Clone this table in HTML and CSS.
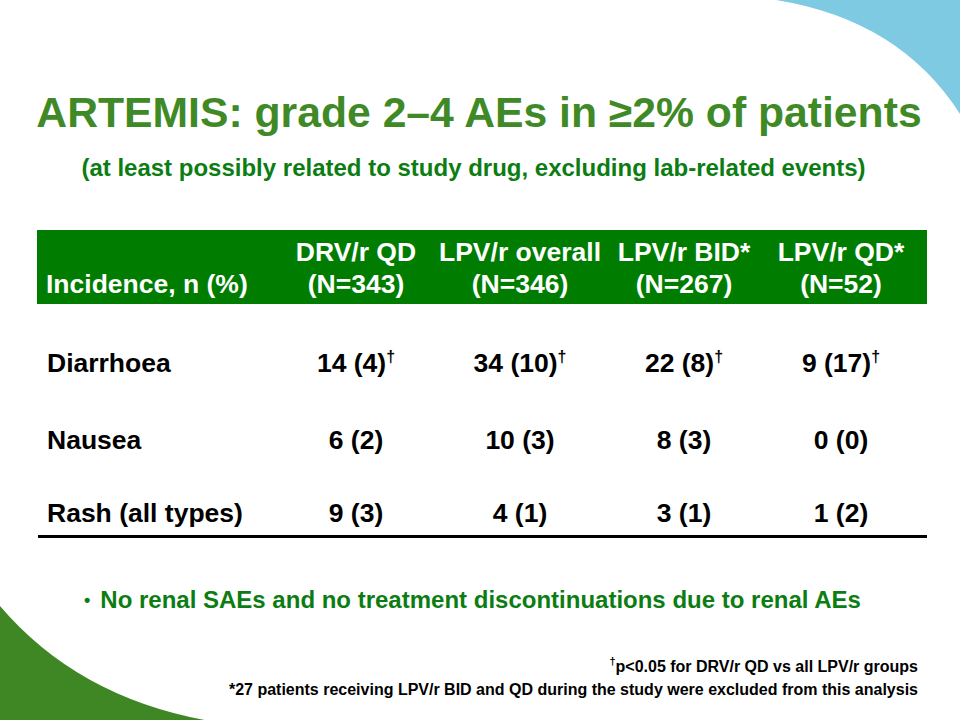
FILE: index.html
```html
<!DOCTYPE html>
<html lang="en">
<head>
<meta charset="utf-8">
<title>ARTEMIS: grade 2–4 AEs</title>
<link rel="stylesheet" href="styles.css">
</head>
<body>
<div class="slide">
  <svg class="decor" width="960" height="720" viewBox="0 0 960 720" aria-hidden="true">
    <path class="decor-blue" d="M 776 0 Q 900 20 960 114 L 960 0 Z"/>
    <path class="decor-green" d="M 0 606 Q 80 700 216 722 L 0 722 Z"/>
  </svg>
  <div class="content">
    <h1 class="title">ARTEMIS: grade 2–4 AEs in ≥2% of patients</h1>
    <p class="subtitle">(at least possibly related to study drug, excluding lab-related events)</p>

    <div class="table">
      <div class="thead">
        <div class="th th-label">Incidence, n (%)</div>
        <div class="th">DRV/r QD<br>(N=343)</div>
        <div class="th">LPV/r overall<br>(N=346)</div>
        <div class="th">LPV/r BID*<br>(N=267)</div>
        <div class="th">LPV/r QD*<br>(N=52)</div>
      </div>
      <div class="tr tr-first">
        <div class="td td-label">Diarrhoea</div>
        <div class="td">14 (4)<sup class="dag">†</sup></div>
        <div class="td">34 (10)<sup class="dag">†</sup></div>
        <div class="td">22 (8)<sup class="dag">†</sup></div>
        <div class="td">9 (17)<sup class="dag">†</sup></div>
      </div>
      <div class="tr tr-second">
        <div class="td td-label">Nausea</div>
        <div class="td">6 (2)</div>
        <div class="td">10 (3)</div>
        <div class="td">8 (3)</div>
        <div class="td">0 (0)</div>
      </div>
      <div class="tr tr-third">
        <div class="td td-label">Rash (all types)</div>
        <div class="td">9 (3)</div>
        <div class="td">4 (1)</div>
        <div class="td">3 (1)</div>
        <div class="td">1 (2)</div>
      </div>
      <div class="rule"></div>
    </div>

    <ul class="bullets">
      <li class="bullet"><span class="dot">•</span><span>No renal SAEs and no treatment discontinuations due to renal AEs</span></li>
    </ul>

    <div class="notes">
      <p class="note"><sup class="note-dag">†</sup>p&lt;0.05 for DRV/r QD vs all LPV/r groups</p>
      <p class="note">*27 patients receiving LPV/r BID and QD during the study were excluded from this analysis</p>
    </div>
  </div>
</div>
</body>
</html>
```

FILE: styles.css
```css
html, body {
  margin: 0;
  padding: 0;
  background: #ffffff;
}

.slide {
  position: relative;
  width: 960px;
  height: 720px;
  overflow: hidden;
  background: #ffffff;
  font-family: "Liberation Sans", Arial, sans-serif;
  font-weight: bold;
  color: #000000;
}

.decor {
  position: absolute;
  left: 0;
  top: 0;
  z-index: 0;
}

.decor-blue { fill: #7fcae3; }
.decor-green { fill: #3f8624; }

.content {
  position: relative;
  z-index: 1;
  display: flex;
  flex-direction: column;
  padding-top: 87px;
}

.title {
  margin: 0;
  padding-right: 2px;
  font-size: 42.7px;
  line-height: 50px;
  text-align: center;
  color: #3f8a26;
  font-weight: bold;
}

.subtitle {
  margin: 16px 0 0;
  padding-right: 13px;
  font-size: 24px;
  line-height: 30px;
  text-align: center;
  color: #0c7d12;
}

.table {
  margin: 47px 33px 0 37px;
  display: flex;
  flex-direction: column;
}

.thead,
.tr {
  display: grid;
  grid-template-columns: 238px 162px 166px 162px 152px;
  padding-right: 10px;
}

.thead {
  background: #007d00;
  color: #ffffff;
  padding-top: 6px;
  padding-bottom: 4px;
}

.th {
  font-size: 26.5px;
  line-height: 32px;
  text-align: center;
  white-space: nowrap;
}

.th-label {
  text-align: left;
  padding-left: 9px;
  align-self: end;
}

.tr {
  font-size: 26.5px;
  line-height: 32px;
}

.tr-first { margin-top: 43px; }
.tr-second { margin-top: 45px; }
.tr-third { margin-top: 41px; }

.td {
  text-align: center;
  white-space: nowrap;
}

.td-label {
  text-align: left;
  padding-left: 10px;
}

.dag {
  font-size: 16px;
  line-height: 0;
  vertical-align: 0.6em;
}

.rule {
  margin-top: 6px;
  height: 3px;
  background: #000000;
  margin-left: 1px;
}

.bullets {
  list-style: none;
  margin: 47px 0 0;
  padding: 0 0 0 84px;
}

.bullet {
  display: flex;
  gap: 10px;
  font-size: 24px;
  line-height: 30px;
  color: #0c7d12;
}

.dot {
  font-size: 18px;
}

.notes {
  margin-top: 40px;
  padding-right: 42px;
  display: flex;
  flex-direction: column;
  align-items: flex-end;
}

.note {
  margin: 0;
  font-size: 16px;
  line-height: 23px;
  text-align: right;
}

.note-dag {
  font-size: 11px;
  line-height: 0;
  vertical-align: 0.6em;
}
```
